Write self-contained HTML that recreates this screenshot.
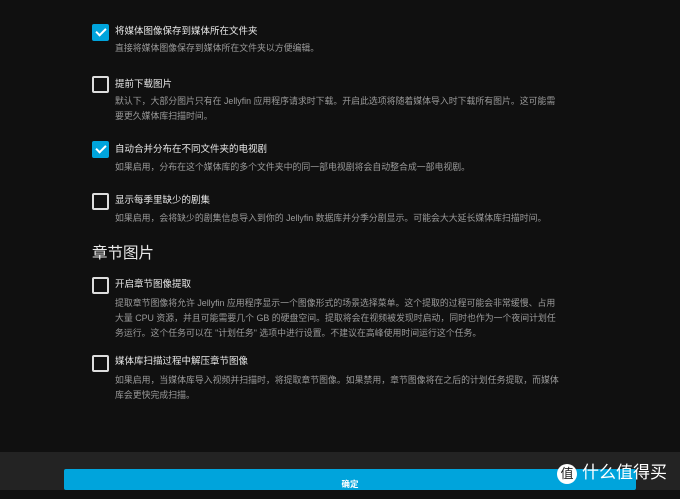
<!DOCTYPE html>
<html><head><meta charset="utf-8"><style>
html,body{margin:0;padding:0}
body{width:680px;height:490px;background:#101010;position:relative;overflow:hidden;font-family:"Liberation Sans","Noto Sans CJK SC",sans-serif;}
.cb{position:absolute;left:92px;width:13px;height:13px;border:2px solid #ddd;border-radius:2px;box-sizing:content-box}
.cb.on{background:#00a4dc;border-color:#00a4dc}
.cb.on:after{content:"";position:absolute;left:4px;top:0px;width:4px;height:8px;border:solid #fff;border-width:0 2px 2px 0;transform:rotate(45deg)}
.t{position:absolute;left:115px;font-size:9.5px;color:#e8e8e8;white-space:nowrap;line-height:12px}
.d{position:absolute;left:115px;font-size:8.9px;color:#9a9a9a;white-space:nowrap;line-height:15px}
h2{position:absolute;left:92px;top:244px;margin:0;font-size:15.5px;font-weight:normal;color:#e8e8e8;line-height:20px}
.foot{position:absolute;left:0;top:452px;width:680px;height:38px;background:#232323}
.btn{position:absolute;left:64px;top:469px;width:572px;height:21px;background:#00a4dc;border-radius:2px;color:#fff;font-size:8.5px;font-weight:bold;text-align:center;line-height:30px}
.logo{position:absolute;left:557px;top:458px;color:#fff;font-size:17px;white-space:nowrap}
.logo span{display:inline-block;width:20px;height:20px;border-radius:50%;background:#fff;color:#222;font-size:13px;text-align:center;line-height:20px;margin-right:5px;vertical-align:middle}
</style></head><body>
<div class="cb on" style="top:24px"></div>
<div class="t" style="top:26px">将媒体图像保存到媒体所在文件夹</div>
<div class="d" style="top:41px">直接将媒体图像保存到媒体所在文件夹以方便编辑。</div>

<div class="cb" style="top:76px"></div>
<div class="t" style="top:79px">提前下载图片</div>
<div class="d" style="top:94px">默认下，大部分图片只有在 Jellyfin 应用程序请求时下载。开启此选项将随着媒体导入时下载所有图片。这可能需<br>要更久媒体库扫描时间。</div>

<div class="cb on" style="top:141px"></div>
<div class="t" style="top:144px">自动合并分布在不同文件夹的电视剧</div>
<div class="d" style="top:160px">如果启用，分布在这个媒体库的多个文件夹中的同一部电视剧将会自动整合成一部电视剧。</div>

<div class="cb" style="top:193px"></div>
<div class="t" style="top:195px">显示每季里缺少的剧集</div>
<div class="d" style="top:211px">如果启用，会将缺少的剧集信息导入到你的 Jellyfin 数据库并分季分剧显示。可能会大大延长媒体库扫描时间。</div>

<h2>章节图片</h2>

<div class="cb" style="top:277px"></div>
<div class="t" style="top:279px">开启章节图像提取</div>
<div class="d" style="top:296px">提取章节图像将允许 Jellyfin 应用程序显示一个图像形式的场景选择菜单。这个提取的过程可能会非常缓慢、占用<br>大量 CPU 资源，并且可能需要几个 GB 的硬盘空间。提取将会在视频被发现时启动，同时也作为一个夜间计划任<br>务运行。这个任务可以在 "计划任务" 选项中进行设置。不建议在高峰使用时间运行这个任务。</div>

<div class="cb" style="top:355px"></div>
<div class="t" style="top:356px">媒体库扫描过程中解压章节图像</div>
<div class="d" style="top:373px">如果启用，当媒体库导入视频并扫描时，将提取章节图像。如果禁用，章节图像将在之后的计划任务提取，而媒体<br>库会更快完成扫描。</div>

<div class="foot"></div>
<div class="btn">确定</div>
<div class="logo"><span>值</span>什么值得买</div>
</body></html>
